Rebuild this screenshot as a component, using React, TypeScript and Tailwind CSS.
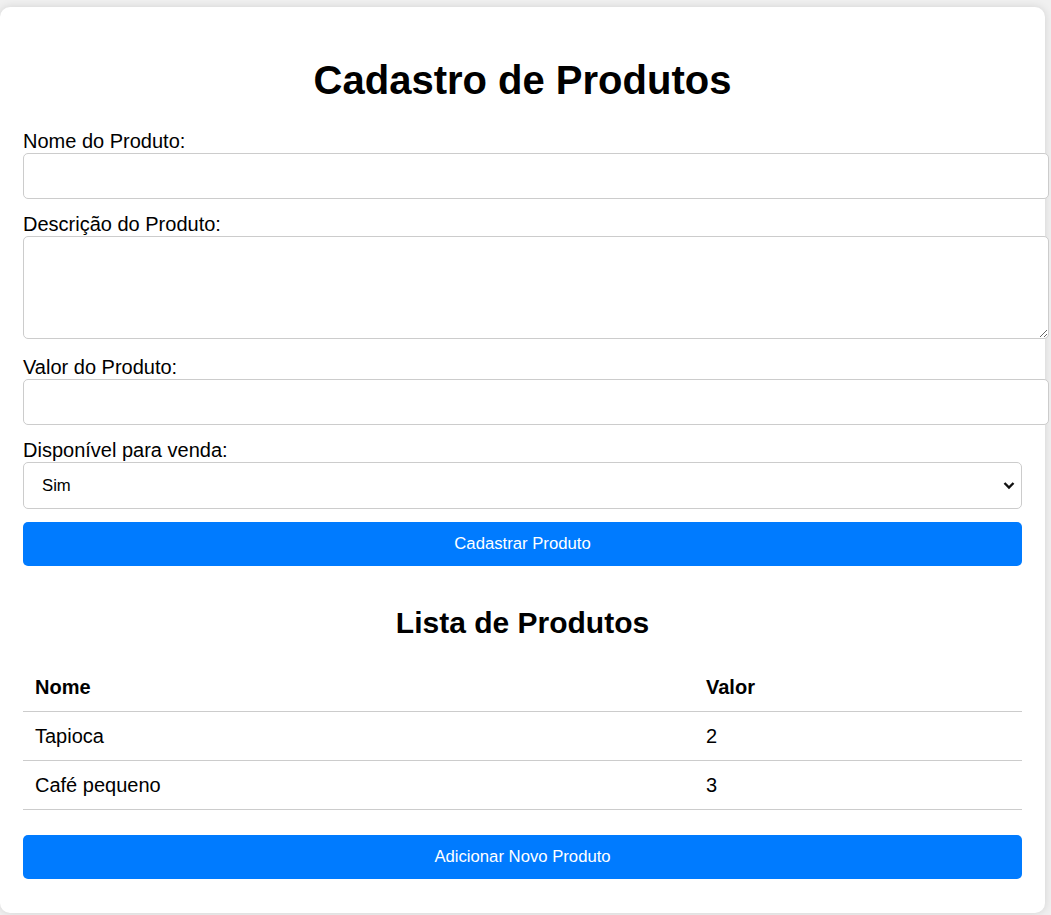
import { useState } from "react";

type Produto = { nome: string; valor: string };

const inputClass =
  "block w-[calc(100%+27px)] h-[46px] border border-[#ccc] rounded-[5px] bg-white px-[12px] text-[20px] outline-none";

export default function App() {
  const [produtos] = useState<Produto[]>([
    { nome: "Tapioca", valor: "2" },
    { nome: "Café pequeno", valor: "3" },
  ]);

  return (
    <div className="min-h-screen bg-[#f0f0f0] pt-[7px] pb-[10px] font-['Liberation_Sans',Arial,sans-serif] text-black">
      <div className="w-[1045px] bg-white rounded-[10px] shadow-[0_0_8px_rgba(0,0,0,0.12)] px-[23px] pt-[50px] pb-[34px]">
        <h1 className="text-center text-[40px] leading-[46px] h-[46px] font-bold mb-[27px]">
          Cadastro de Produtos
        </h1>

        <form onSubmit={(e) => e.preventDefault()}>
          <label className="block text-[20px] leading-[23px]">Nome do Produto:</label>
          <input type="text" className={inputClass + " mb-[14px]"} />

          <label className="block text-[20px] leading-[23px]">Descrição do Produto:</label>
          <textarea className="block w-[calc(100%+27px)] h-[103px] border border-[#ccc] rounded-[5px] bg-white px-[12px] py-[8px] text-[20px] outline-none mb-[17px]" />

          <label className="block text-[20px] leading-[23px]">Valor do Produto:</label>
          <input type="text" className={inputClass + " mb-[14px]"} />

          <label className="block text-[20px] leading-[23px]">Disponível para venda:</label>
          <div className="relative mb-[13px]">
            <select className="block w-full h-[47px] appearance-none border border-[#ccc] rounded-[5px] bg-white pl-[18px] pr-[40px] text-[16.7px] outline-none">
              <option>Sim</option>
              <option>Não</option>
            </select>
            <svg
              className="absolute right-[7px] top-[19px] pointer-events-none"
              width="12"
              height="9"
              viewBox="0 0 12 9"
              fill="none"
            >
              <path d="M1.5 2l4.5 4.5L10.5 2" stroke="#111" strokeWidth="2.4" />
            </svg>
          </div>

          <button
            type="submit"
            className="block w-full h-[44px] rounded-[5px] bg-[#007bff] text-white text-[16.7px]"
          >
            Cadastrar Produto
          </button>
        </form>

        <h2 className="text-center text-[30px] leading-[35px] h-[35px] font-bold mt-[39px] mb-[23px]">
          Lista de Produtos
        </h2>

        <table className="w-full border-collapse text-[20px]">
          <thead>
            <tr className="h-[48px] border-b border-[#ccc]">
              <th className="w-[671px] px-[12px] text-left font-bold">Nome</th>
              <th className="px-[12px] text-left font-bold">Valor</th>
            </tr>
          </thead>
          <tbody>
            {produtos.map((p) => (
              <tr key={p.nome} className="h-[49px] border-b border-[#ccc]">
                <td className="px-[12px]">{p.nome}</td>
                <td className="px-[12px]">{p.valor}</td>
              </tr>
            ))}
          </tbody>
        </table>

        <button className="block w-full h-[44px] mt-[25px] rounded-[5px] bg-[#007bff] text-white text-[16.7px]">
          Adicionar Novo Produto
        </button>
      </div>
    </div>
  );
}
